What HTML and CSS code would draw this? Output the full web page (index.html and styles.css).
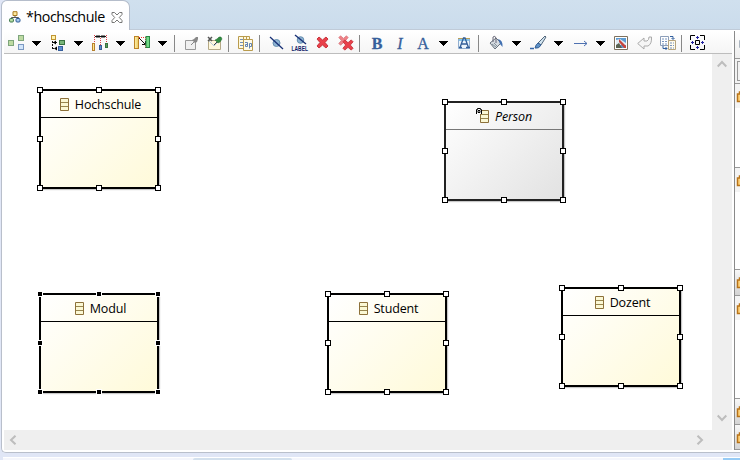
FILE: index.html
```
<!DOCTYPE html>
<html lang="de">
<head>
<meta charset="utf-8">
<title>hochschule</title>
<link rel="stylesheet" href="styles.css">
</head>
<body>
<svg class="defs" width="0" height="0">
  <defs>
    <linearGradient id="gold" x1="0" x2="1"><stop offset="0" stop-color="#fff3b0"/><stop offset="1" stop-color="#e9c860"/></linearGradient>
    <symbol id="caret" viewBox="0 0 9 5"><path d="M0 0H9V1H8V2H7V3H6V4H5V5H4V4H3V3H2V2H1V1H0Z" fill="#000"/></symbol>
    <symbol id="class" viewBox="0 0 9 13"><path d="M.5 .5H8.500V12.500H.5Z" fill="#fbf8d4" stroke="#8d713a"/><path d="M1 4.500H8M1 8.500H8" stroke="#98864f"/></symbol>
    <symbol id="cross" viewBox="0 0 13 13"><path d="M1 3L3 1L6.500 4L10 1L12 3L9 6.500L12 10L10 12L6.500 9L3 12L1 10L4 6.500Z" fill="#e9404a" stroke="#c9373f"/></symbol>
    <symbol id="folder" viewBox="0 0 5 12"><path d="M6 1H3.500V3H1.500V10.500H6" fill="#ffd27a" stroke="#b9741a" stroke-width="1.500"/></symbol>
  </defs>
</svg>
<div class="workbench">
  <header class="tabs">
    <div class="tab">
      <svg width="12" height="12" viewBox="0 0 12 12"><path d="M6 4V7M2.500 8V6.500H9.500V8" fill="none" stroke="#555"/><path d="M4 .7H8V4.500H4Z" fill="#ffeaa0" stroke="#a97b20"/><rect x=".6" y="7.500" width="3.800" height="3.500" rx="1" fill="#b9e0a4" stroke="#39734a"/><rect x="7" y="7.500" width="4" height="3.500" rx="1" fill="#a9cbef" stroke="#2d5b97"/></svg>
      <span class="title">*hochschule</span>
      <svg class="close" width="12" height="11" viewBox="0 0 12 11"><path d="M1 .5H3.500L6 3L8.500 .5H11V2.500L8.300 5.500L11 8.500V10.500H8.500L6 8L3.500 10.500H1V8.500L3.700 5.500L1 2.500Z" fill="#fff" stroke="#777"/></svg>
    </div>
  </header>
  <main class="editor">
    <div class="main">
      <div class="toolbar">
        <svg class="icon" viewBox="0 0 16 16"><rect x=".5" y="5.500" width="5" height="5" fill="#bddaa2" stroke="#7ea57c"/><rect x="10.500" y=".5" width="5" height="5" fill="#bddaa2" stroke="#7ea57c"/><rect x="10.500" y="9.500" width="5" height="5" fill="#d2e5fa" stroke="#7b99c2"/></svg>
        <svg class="caret"><use href="#caret"/></svg>
        <svg class="icon" viewBox="0 0 16 16"><path d="M2.500 6V14M2 7.500H8M2 13.500H7" stroke="#111" stroke-dasharray="2 1"/><path d="M3 7.500L6 5.500V9.500ZM4 13.500L7 11.500V15.500Z"/><rect x="1.500" y=".5" width="4" height="4" fill="#fff2ae" stroke="#c09432"/><rect x="9.500" y="5.500" width="5" height="4" fill="#79b579" stroke="#397240"/><rect x="8.500" y="11.500" width="4" height="4" fill="#5f8fd0" stroke="#375f9d"/></svg>
        <svg class="caret"><use href="#caret"/></svg>
        <svg class="icon" viewBox="0 0 16 16"><path d="M2.500 0V8M8.500 1V10M14.500 0V8" stroke="#e04149" stroke-dasharray="1 1"/><path d="M3 1.500H14M5 0V3M7 0V3M10 0V3M12 0V3" stroke="#111"/><rect x=".5" y="8.500" width="2" height="7" fill="#ffe98d" stroke="#b7812d"/><rect x="7.500" y="10.500" width="2" height="4" fill="#628dc8" stroke="#365b99"/><rect x="13.500" y="8.500" width="2" height="4" fill="#5a9b60" stroke="#39713e"/></svg>
        <svg class="caret"><use href="#caret"/></svg>
        <svg class="icon" viewBox="0 0 16 16"><path d="M5 2.500H11M11.500 2V13" stroke="#e33" stroke-dasharray="1 1"/><path d="M5 3L11 9M8 9.500H11.500V6" fill="none" stroke="#111"/><rect x=".5" y="1.500" width="4" height="12" fill="url(#gold)" stroke="#bc8428"/><rect x="12" y="1.500" width="3.500" height="11" fill="#72db86" stroke="#278744"/></svg>
        <svg class="caret"><use href="#caret"/></svg>
        <i class="sep"></i>
        <svg class="icon" viewBox="0 0 16 16"><path d="M1.500 5.500H11.500V14.500H1.500Z" fill="#f0f0f0" stroke="#999"/><path d="M7 10L10 7" stroke="#888"/><path d="M8 5L10 4L12 2H14V4L13 7L11 8Z" fill="#888"/></svg>
        <svg class="icon" viewBox="0 0 16 16"><path d="M1.500 5.500H13.500V14.500H1.500Z" fill="#fff8dc" stroke="#b5a986"/><path d="M2 6L7 11L12 6" fill="none" stroke="#b8c9dc"/><path d="M1 2L5 6M5 2L1 6" stroke="#555" stroke-width="1.500"/><path d="M7 10L10 7" stroke="#444"/><path d="M8 5L10 4L12 2H14L15 4L13 7L11 8Z" fill="#318a40" stroke="#20692d" stroke-width=".5"/></svg>
        <i class="sep"></i>
        <svg class="icon" viewBox="0 0 16 16"><path d="M.5 1.500H8.500V13.500H.5ZM5.500 1.500H11.500V13.500H5.500Z" fill="#fff9df" stroke="#b99b4d"/><path d="M2 4.500H6M2 7.500H5M2 10.500H5" stroke="#7390b8"/><path d="M5.500 4.500H14.500V15.500H5.500Z" fill="#fffbe9" stroke="#b99b4d"/><path d="M7 7.500H9.500V11.500H7.500V9.500H9.500M11.500 13.500V8.500H13.500V11.500H11.500" fill="none" stroke="#6384b3"/></svg>
        <i class="sep"></i>
        <svg class="icon" viewBox="0 0 16 16"><circle cx="7.500" cy="8" r="3.500" fill="#8fb4d4" stroke="#668faf"/><path d="M1 2L14 14" stroke="#172f75" stroke-width="1.300"/></svg>
        <svg class="icon" viewBox="0 0 16 16"><circle cx="8.500" cy="5" r="3.300" fill="#8fb4d4" stroke="#668faf"/><path d="M3 0L14 9" stroke="#172f75" stroke-width="1.300"/><text class="label-text" x="-.5" y="15.800" textLength="16.500" lengthAdjust="spacingAndGlyphs">LABEL</text></svg>
        <svg class="icon" viewBox="0 0 16 16"><use href="#cross" x="1" y="1" width="13" height="13"/></svg>
        <svg class="icon" viewBox="0 0 16 16"><use href="#cross" x="0" y="0" width="11" height="11" opacity=".65"/><use href="#cross" x="4" y="4" width="12" height="12"/></svg>
        <i class="sep"></i>
        <span class="icon letter bold">B</span>
        <span class="icon letter italic">I</span>
        <span class="icon letter">A</span>
        <svg class="caret"><use href="#caret"/></svg>
        <svg class="icon" viewBox="0 0 16 16"><path d="M1.500 3.500H12.500V13.500H1.500Z" fill="#ecf5fb" stroke="#91aed0"/><path d="M1 3.500H13" stroke="#b9a05b"/><path d="M2 5H12" stroke="#86c5ea" stroke-width="2"/><path d="M3 12.500L6.500 3H8L11.500 12.500M4.500 9H10M2 12.500H5M9 12.500H13" fill="none" stroke="#345f99" stroke-width="1.300"/></svg>
        <i class="sep"></i>
        <svg class="icon" viewBox="0 0 16 16"><path d="M2 8L8 3L13 8L7 14Z" fill="#d6dbe0" stroke="#68737d"/><path d="M5 7V2Q7 0 8 3V8" fill="none" stroke="#667"/><path d="M4 9L8 12M6 8L9 11" stroke="#81909b"/><path d="M10 4Q15 5 14.500 12L12 9Z" fill="#4170b1"/></svg>
        <svg class="caret"><use href="#caret"/></svg>
        <svg class="icon" viewBox="0 0 16 16"><path d="M15 1L16 2L11 10L8 8Z" fill="#d1e4f0" stroke="#53677b"/><path d="M8 8L11 10Q9 14 5 13Q6 9 8 8Z" fill="#5f91c6" stroke="#345f95"/><path d="M0 13.500H4" stroke="#3466aa" stroke-width="1.500"/></svg>
        <svg class="caret"><use href="#caret"/></svg>
        <svg class="icon" viewBox="0 0 16 16"><path d="M2 8.500H15M12 6L15 8.500L12 11" fill="none" stroke="#4e71b1"/></svg>
        <svg class="caret"><use href="#caret"/></svg>
        <svg class="icon" viewBox="0 0 16 16"><path d="M.5 1.500H13.500V14.500H.5Z" fill="#fff" stroke="#7e715e"/><path d="M2 3H12V13H2Z" fill="#5c9cd3"/><path d="M2 5L6 4L12 8V10H2Z" fill="#e3edf4"/><path d="M2 10L5 8L8 13H2Z" fill="#5b6250"/><path d="M5 4L12 11V13H10L5 7Z" fill="#c8453d"/></svg>
        <svg class="icon" viewBox="0 0 16 16"><path d="M.7 8.500L7 3V6H10Q12 5 12 2H14.500Q15 9 11 11H7V14Z" fill="#f5f5f5" stroke="#aaa"/></svg>
        <svg class="icon" viewBox="0 0 16 16"><path d="M.5 1.500H8.500V10.500H.5Z" fill="#fff" stroke="#8c9eb9"/><path d="M2 4H7M2 6.500H7M2 9H7" stroke="#7793bd" stroke-dasharray="2 1"/><path d="M8.500 5.500H15.500V14.500H8.500Z" fill="#fffbed" stroke="#b5a37d"/><path d="M10 8H14M10 10.500H14M10 13H14" stroke="#7793bd" stroke-dasharray="2 1"/><path d="M10 1.500H13V4M11.500 3L13 4.500L14.500 3M3 11V13.500H7M5.500 12L7 13.500L5.500 15" fill="none" stroke="#315f9e"/></svg>
        <i class="sep"></i>
        <svg class="icon select" viewBox="0 0 16 16"><path d="M.5 5V.5H5M10 .5H14.500V5M14.500 10V14.500H10M5 14.500H.5V10M5.500 5.500H9.500V9.500H5.500Z" fill="none" stroke="#000"/><path d="M7.500 1V4M7.500 11V14M1 7.500H4M11 7.500H14M6 2.500H9M6 12.500H9M2.500 6V9M12.500 6V9" stroke="#2424a0"/></svg>
      </div>
      <div class="view">
        <div class="canvas">
          <section class="node hochschule"><h2><svg class="cls"><use href="#class"/></svg><span>Hochschule</span></h2><b class="n w"></b><b class="n"></b><b class="n e"></b><b class="w"></b><b class="e"></b><b class="s w"></b><b class="s"></b><b class="s e"></b></section>
          <section class="node person"><h2><svg class="cls"><use href="#class"/></svg><svg class="abstract" viewBox="0 0 6 6"><path d="M0 0H6V6H0Z" fill="#fff"/><path d="M.5 6V1.500H1.500V.5H4.500V1.500H5.500V6M2 2.500H4V4.500H2Z" fill="none" stroke="#000"/></svg><span>Person</span></h2><b class="n w"></b><b class="n"></b><b class="n e"></b><b class="w"></b><b class="e"></b><b class="s w"></b><b class="s"></b><b class="s e"></b></section>
          <section class="node modul primary"><h2><svg class="cls"><use href="#class"/></svg><span>Modul</span></h2><b class="n w"></b><b class="n"></b><b class="n e"></b><b class="w"></b><b class="e"></b><b class="s w"></b><b class="s"></b><b class="s e"></b></section>
          <section class="node student"><h2><svg class="cls"><use href="#class"/></svg><span>Student</span></h2><b class="n w"></b><b class="n"></b><b class="n e"></b><b class="w"></b><b class="e"></b><b class="s w"></b><b class="s"></b><b class="s e"></b></section>
          <section class="node dozent"><h2><svg class="cls"><use href="#class"/></svg><span>Dozent</span></h2><b class="n w"></b><b class="n"></b><b class="n e"></b><b class="w"></b><b class="e"></b><b class="s w"></b><b class="s"></b><b class="s e"></b></section>
        </div>
        <div class="vscroll">
          <svg width="10" height="8" viewBox="0 0 10 8"><path d="M.7 6.500L5 2L9.300 6.500"/></svg>
          <svg width="10" height="8" viewBox="0 0 10 8"><path d="M.7 1.500L5 6L9.300 1.500"/></svg>
        </div>
        <div class="hscroll">
          <svg width="8" height="10" viewBox="0 0 8 10"><path d="M6.500 .7L2 5L6.500 9.300"/></svg>
          <svg width="8" height="10" viewBox="0 0 8 10"><path d="M1.500 .7L6 5L1.500 9.300"/></svg>
        </div>
      </div>
    </div>
    <aside class="palette">
      <div class="head"><i></i></div>
      <div class="search"><i></i></div>
      <div class="drawer open first"><svg><use href="#folder"/></svg></div>
      <div class="drawer open second"><svg><use href="#folder"/></svg></div>
      <div class="drawer shut"><svg><use href="#folder"/></svg></div>
      <div class="drawer open third"><svg><use href="#folder"/></svg></div>
      <div class="drawer shut"><svg><use href="#folder"/></svg></div>
      <div class="drawer shut last"><svg><use href="#folder"/></svg></div>
    </aside>
  </main>
  <footer><div class="lower"><i></i><em></em></div></footer>
</div>
</body>
</html>
```

FILE: styles.css
```
* { box-sizing: border-box; }
body { margin: 0; overflow: hidden; background: #e0e6f6; font-family: "Open Sans", "Noto Sans", sans-serif; color: #000; }
.defs { position: absolute; }
svg { display: block; flex: none; }
.workbench { width: 740px; height: 460px; display: flex; flex-direction: column; }
.tabs { height: 30px; margin-left: 1px; display: flex; background: linear-gradient(#d0e0ee, #cbdcec); border-bottom: 1px solid #c0cbd8; border-radius: 6px 0 0; }
.tab { width: 129px; height: 30px; display: flex; align-items: center; padding: 3px 0 0 7px; background: linear-gradient(#fff, #fdfdff); border: 1px solid #b5bdcb; border-bottom: 0; border-radius: 6px 7px 0 0; }
.title { width: 78px; margin-left: 5px; font-size: 14.3px; letter-spacing: -.45px; line-height: 18px; white-space: nowrap; }
.close { margin-left: 7px; }
.editor { height: 423px; margin-left: 1px; display: flex; background: #fff; border: solid #b9bfcb; border-width: 0 0 1px 1px; border-radius: 0 0 0 5px; padding: 1px 0 2px 2px; }
.main { width: 728px; flex: none; }
.toolbar { height: 23px; display: flex; align-items: center; background: linear-gradient(#fff, #f5f5f5); border-bottom: 1px solid #bdbdbd; padding: 2px 0 0; }
.icon { width: 16px; height: 16px; margin-left: 7px; flex: none; overflow: visible; }
.icon:first-child { margin-left: 4px; }
.icon.select { margin-left: 6px; }
.caret { width: 9px; height: 5px; margin: 1px 2px 0 8px; }
.sep { width: 1px; height: 17px; margin: 0 2px 0 5px; background: #888; flex: none; }
.letter { display: block; text-align: center; font: 16px/18px "Liberation Serif", serif; color: #365f9b; -webkit-text-stroke: .3px #365f9b; }
.bold { font-weight: bold; }
.italic { font-style: italic; }
.label-text { font: bold 7.500px "Liberation Sans", sans-serif; fill: #101d68; }
.view { display: grid; grid-template: 376px 20px / 708px 20px; background: #efefef; }
.canvas { position: relative; background: #fff; }
.vscroll, .hscroll { display: flex; justify-content: space-between; align-items: center; }
.vscroll { flex-direction: column; padding: 6px 0 8px; }
.hscroll { padding: 0 8px 0 5px; }
.vscroll path, .hscroll path { fill: none; stroke: #bdbdbd; stroke-width: 2; }
.node { position: absolute; width: 120px; height: 100px; border: 2px solid #000; background: linear-gradient(135deg, #fff, #fffad9); box-shadow: 1px 1px 1px #c8c8c8; }
.hochschule { left: 35px; top: 35px; }
.person { left: 440px; top: 47px; border-color: #222; background: linear-gradient(135deg, #fff, #e2e2e2); }
.modul { left: 35px; top: 239px; }
.student { left: 323px; top: 239px; }
.dozent { left: 557px; top: 233px; }
.node h2 { position: relative; height: 27px; margin: 0; padding-left: 3px; display: flex; gap: 6px; align-items: center; justify-content: center; border-bottom: 1px solid #000; font-size: 12.5px; letter-spacing: -.15px; line-height: 18px; font-weight: normal; }
.node h2 span { padding-top: 1px; }
.person h2 { border-color: #777; font-style: italic; padding-left: 4px; }
.cls { width: 9px; height: 13px; }
.abstract { position: absolute; left: 30px; top: 5px; width: 6px; height: 6px; }
.node b { position: absolute; width: 6px; height: 6px; left: 55px; top: 45px; background: #fff; border: 1px solid #000; }
.node b.n { top: -4px; }
.node b.s { top: 94px; }
.node b.w { left: -4px; }
.node b.e { left: 114px; }
.primary b { background: #000; border-color: #fff; }
.palette { width: 6px; margin-left: 2px; flex: none; height: 419px; background: #fff; border-left: 1px solid #8a8a8a; }
.head { height: 28px; padding: 9px 0 0 4px; background: linear-gradient(#fff, #eee); border-bottom: 1px solid #999; }
.head i { display: block; height: 8px; background: #acb6c0; border-radius: 4px 0 0 4px; }
.search { height: 25px; padding: 2px 0 0 2px; background: #f3f3f3; border-bottom: 1px solid #999; }
.search i { display: block; height: 20px; border: 1px solid #999; border-right: 0; }
.drawer { display: flex; padding: 7px 0 0 1px; border-bottom: 1px solid #999; }
.drawer svg { width: 5px; height: 12px; }
.open { background: linear-gradient(#f4f4f4 24px, #fff 24px); }
.shut { height: 26px; background: linear-gradient(#f8f8f8, #d4d4d4); }
.first { height: 84px; }
.second { height: 102px; }
.third { height: 103px; }
.last { height: 25px; }
footer { flex: 1; padding: 4px 0 0 3px; }
.lower { height: 3px; display: flex; justify-content: space-between; background: #f5f6fc; border-top: 1px solid #fff; }
.lower i { width: 99px; margin-left: 190px; background: #d3e0ed; border-radius: 4px 4px 0 0; }
.lower em { width: 17px; background: #97cbf5; }
```
